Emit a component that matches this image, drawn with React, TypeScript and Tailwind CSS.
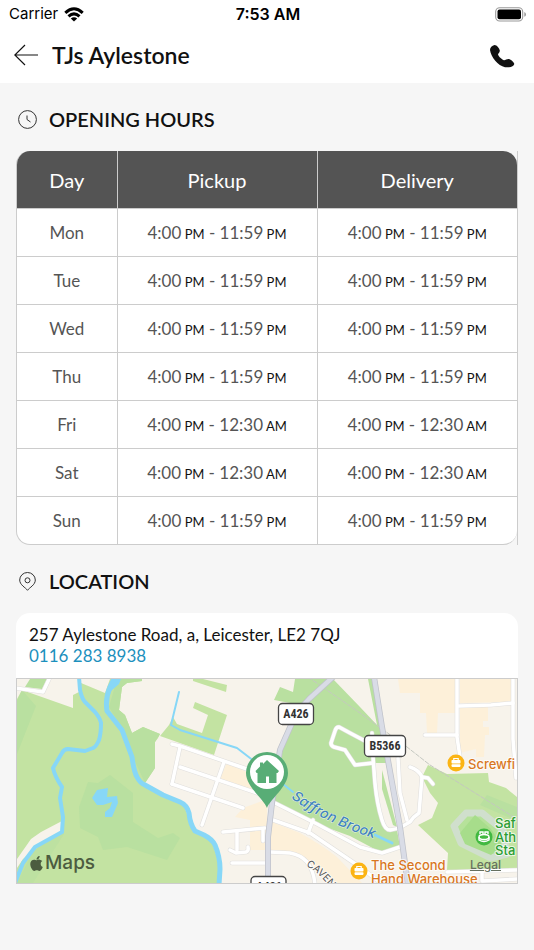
import { FaApple } from 'react-icons/fa';

interface TimeSlot {
  from: string;
  fromPeriod: string;
  to: string;
  toPeriod: string;
}

const evening: TimeSlot = { from: '4:00', fromPeriod: 'PM', to: '11:59', toPeriod: 'PM' };
const late: TimeSlot = { from: '4:00', fromPeriod: 'PM', to: '12:30', toPeriod: 'AM' };

const openingHours = [
  { day: 'Mon', pickup: evening, delivery: evening },
  { day: 'Tue', pickup: evening, delivery: evening },
  { day: 'Wed', pickup: evening, delivery: evening },
  { day: 'Thu', pickup: evening, delivery: evening },
  { day: 'Fri', pickup: late, delivery: late },
  { day: 'Sat', pickup: late, delivery: late },
  { day: 'Sun', pickup: evening, delivery: evening },
];

const streets = [
  'M-2 9L26 13L33-2',
  'M155 65L163 67L230 90L240 96',
  'M163 88L240 114',
  'M155 105L226 129',
  'M163 68L155 105',
  'M207 83L185 146',
  'M256 123L300 145L343 168L365 174L383 168',
  'M256 141L293 154L343 188L364 204',
  'M296 141L291 154',
  'M206 153L248 149',
  'M220 153V171M213 171L219 174L229 173Q232 172 231 168',
  'M246 151V162',
  'M215 184L248 184',
  'M253 173L273 174Q284 176 290 183Q297 192 298 206',
  'M350 63L333 54L322 48Q319 48 318 52L314 64Q314 67 317 68L328 71L338 86L356 84',
  'M355 54L356 78L358 104Q360 125 365 141Q368 151 373 151Q380 150 384 148L393 143Q396 138 402 134L405 98Q402 91 393 88',
  'M405 98L411 99L416 105',
  'M381 79L383 114L390 141',
  'M440-2V58L443 78',
  'M408 56H440',
  'M442 27L474 26L496 24',
  'M496-2V60L499 99',
  'M430 193L500 191M465 192V202L500 200',
];

function Briefcase({ x, y }: { x: number; y: number }) {
  return (
    <g transform={`translate(${x} ${y})`}>
      <circle r="8.5" fill="#fbb414" />
      <path d="M-2.2-3V-4.5H2.2V-3" fill="none" stroke="white" strokeWidth="1.2" />
      <rect x="-4.500" y="-3" width="9" height="3.6" rx=".8" fill="white" />
      <rect x="-4.500" y="1.3" width="9" height="2.600" rx=".8" fill="white" />
    </g>
  );
}

function MapArtwork() {
  return (
    <svg
      viewBox="0 0 500 204"
      preserveAspectRatio="xMidYMid slice"
      className="block h-[204px] w-full"
      role="img"
      aria-label="Map of Aylestone Road"
    >
      <rect width="500" height="204" fill="#f7f3eb" />

      {/* parks */}
      <path d="M13 0H30L25 10L8 8Z" fill="#b9e0a0" />
      <path
        d="M5 11L56 29V16L64 12V4L88 14L93 0H125V2L110 4L105 8L102 31L108 36L115 54L126 48L143 55L141 59L138 63V89L128 104L146 116L166 124L175 148L195 163L202 184V204H0V20Z"
        fill="#c3e3a2"
      />
      <path d="M5 11L19 27L0 75V22Z" fill="#b9e0a0" />
      <path
        d="M100 0H125V2L110 4L105 8L102 31L108 36L115 54L126 48L143 55L138 63V89L128 104L116 78L106 51L92 28Z"
        fill="#b9e0a0"
      />
      <path
        d="M71 103L81 104L93 96L116 114V143L141 159L156 154L163 159L150 181L110 168L86 171L81 158L63 149L62 128Z"
        fill="#b9e0a0"
      />
      <path d="M45 142V153L25 165L6 180L0 189V180L14 160L24 153Z" fill="#f7f3eb" />
      <path d="M45 153L47 155L16 204H0L18 168Z" fill="#b9e0a0" opacity=".6" />
      <path d="M152 46L156 38L160 45L185 54L191 36L176 29L178 23L210 36L197 76L143 57Z" fill="#c3e3a2" />
      <path d="M176 0H186L210 6L209 13L176 2Z" fill="#c3e3a2" />
      <path
        d="M256 123L263 74L284 26L257 21L263 8L276 13L278 0H316L343 28L360 46L351 0H358L370 84H358L362 130L371 151H380L383 168L365 174L333 157L300 145Z"
        fill="#b9e0a0"
      />
      <path d="M365 91L380 148L376 146L365 110Z" fill="#b9e0a0" />
      <path
        d="M411 86L430 95L471 94L472 103L489 109L500 118V191H430L431 174L401 146L415 139L421 124L413 114L405 98Z"
        fill="#c3e3a2"
      />
      <path d="M470 116L500 128V142L463 126Z" fill="#b9e0a0" />

      {/* commercial blocks */}
      <path d="M381 0H440V34H421L420 54H410L409 34H403V14H383Z" fill="#fdf0d9" />
      <path d="M443 0H494V23L443 24ZM443 28H471V42H466V48H472V56H468L467 78H459V70L443 74Z" fill="#fdf0d9" />
      <path d="M210 84L230 93L238 114L203 99Z" fill="#fdf0d9" />
      <path d="M226 129L250 120V171H233V141L218 138Z" fill="#fdf0d9" />
      <path d="M255 143L283 154Q305 166 320 178L345 204H313L293 184L275 174L253 171Z" fill="#fdf0d9" />

      {/* athletics track */}
      <path
        d="M437 147L449 134L465 134L486 151L490 175L474 179L444 164Z"
        fill="#b6e29a"
        stroke="#d0dfcd"
        strokeWidth="7"
        strokeLinejoin="round"
      />
      <path d="M443 154L458 136L474 150L485 166L474 176L448 165Z" fill="#a7dd8b" />

      {/* water */}
      <g fill="none" stroke="#87d7f7" strokeLinecap="round" strokeLinejoin="round">
        <path
          d="M62-2L63 11Q65 20 68 23L78 33Q83 39 84 44Q84 55 82 61Q79 68 76 69L68 72L51 70Q47 70 45 74L36 89Q38 98 45 108L43 119L46 138L45 153L18 168L6 184L-2 204"
          strokeWidth="4"
        />
        <path
          d="M98-2L93 8Q88 20 90 32L105 51L115 78Q117 93 120 98Q123 104 128 106L146 116L163 123Q170 126 172 134Q173 145 178 152L187 156Q195 160 198 166Q203 178 203 190L202 206"
          strokeWidth="5"
        />
        <path d="M162 13L154 46L163 51L220 69L233 79L276 113" strokeWidth="2" />
        <path d="M358 156L375 164" strokeWidth="3" />
      </g>
      <path d="M94 0H104L102 5L94 12Z" fill="#87d7f7" />
      <path
        d="M75 119L80 111L91 109L90 118L100 117L101 124L95 138H88V133L93 129L95 123L86 126H80Z"
        fill="#87d7f7"
      />

      {/* railway */}
      <path d="M291-2L343 34L390 68L413 86L500 140" fill="none" stroke="#c4c7c0" strokeWidth="1" strokeDasharray="5 1" />

      {/* streets */}
      <g fill="none" strokeLinecap="round" strokeLinejoin="round">
        <g stroke="#e0dfdd" strokeWidth="4.600">
          {streets.map((d) => (
            <path key={d} d={d} />
          ))}
        </g>
        <g stroke="white" strokeWidth="3.500">
          {streets.map((d) => (
            <path key={d} d={d} />
          ))}
        </g>
        <g stroke="#bfc2ca" strokeWidth="6">
          <path d="M316-2L292 20Q280 32 275 44L263 71L255 124L251 158V206" />
          <path d="M357-2L365 48L383 148L391 206" />
        </g>
        <g stroke="#d9dce6" strokeWidth="4.500">
          <path d="M316-2L292 20Q280 32 275 44L263 71L255 124L251 158V206" />
          <path d="M357-2L365 48L383 148L391 206" />
        </g>
      </g>

      {/* road shields */}
      <g
        fill="#333"
        textAnchor="middle"
        fontFamily="'Liberation Sans Narrow', 'Roboto Condensed', Roboto, sans-serif"
        fontSize="12"
        fontWeight="700"
      >
        <rect x="261.500" y="24.500" width="35" height="21" rx="4" fill="white" stroke="#444" strokeWidth="1.300" />
        <text x="279" y="39">A426</text>
        <rect x="347.500" y="56.500" width="41" height="21" rx="4" fill="white" stroke="#444" strokeWidth="1.300" />
        <text x="368" y="71">B5366</text>
        <rect x="234" y="197.500" width="35" height="21" rx="4" fill="white" stroke="#444" strokeWidth="1.300" />
        <text x="252" y="212">A426</text>
      </g>

      {/* labels */}
      <path id="brook" d="M274 119Q312 147 366 162" fill="none" />
      <path id="caven" d="M289 187Q304 194 322 220" fill="none" />
      <g fontFamily="Inter, sans-serif" stroke="white" strokeOpacity=".7" paintOrder="stroke" strokeLinejoin="round">
        <text fontSize="14" fontWeight="500" fontStyle="italic" fill="#4285bd" strokeWidth="1">
          <textPath href="#brook">Saffron Brook</textPath>
        </text>
        <text fontSize="10" fill="#555" strokeWidth="2">
          <textPath href="#caven">CAVEN</textPath>
        </text>
        <g fontSize="13" fontWeight="500" fill="#d9771f" strokeWidth="2">
          <text x="451" y="90">Screwfi</text>
          <text x="354" y="191">The Second</text>
          <text x="354" y="205">Hand Warehouse</text>
        </g>
        <g fontSize="13" fontWeight="500" fill="#2b9d33" strokeWidth="2">
          <text x="478" y="149">Saf</text>
          <text x="478" y="163">Ath</text>
          <text x="478" y="176">Sta</text>
        </g>
      </g>
      <Briefcase x={439} y={84} />
      <Briefcase x={342} y={192} />
      <circle cx="467" cy="158" r="8.500" fill="#42b941" />
      <g fill="none" stroke="white" strokeWidth="1.400">
        <ellipse cx="467" cy="158" rx="5" ry="2.500" />
        <path d="M462 158V161Q467 164 472 161V158M463 155V153H466V155M468 155V153H471V155" />
      </g>

      {/* restaurant marker */}
      <path d="M250 129C247 120 229 108 229 94A21 21 0 0 1 271 94C271 108 253 120 250 129Z" fill="#58ad76" />
      <circle cx="250" cy="93" r="17" fill="white" />
      <path
        d="M250 81L262 92L260.500 94H259.500V104H252V97.500H249V104H240.500V94H239.500L238.500 92L243 87.500V83.500H246V85Z"
        fill="#58ad76"
      />
    </svg>
  );
}

function StatusBar() {
  return (
    <div className="grid h-7 grid-cols-3 items-center pr-[7px] pl-[9px] font-['Inter',sans-serif] text-[15px] text-black">
      <div className="flex items-center gap-[6px]">
        <span>Carrier</span>
        <svg width="20" height="15" viewBox="0 0 20 15" fill="none" stroke="black" strokeWidth="3">
          <path d="M1.300 5.800Q10-2.200 18.700 5.800M4.500 9.400Q10 4.200 15.500 9.400" />
          <path d="M10 14.500L6.800 11.500Q10 9 13.200 11.500Z" fill="black" stroke="none" />
        </svg>
      </div>
      <span className="text-center text-base leading-6 font-semibold">7:53 AM</span>
      <svg width="32" height="15" viewBox="0 0 32 15" className="justify-self-end">
        <rect x=".7" y=".7" width="27" height="13.300" rx="4" fill="white" stroke="#999" strokeWidth="1.100" />
        <rect x="2.500" y="2.500" width="23.500" height="9.700" rx="2" fill="black" />
        <path d="M29.300 5V9.800Q31 9 31 7.400T29.300 5Z" fill="#999" />
      </svg>
    </div>
  );
}

function Hours({ slot }: { slot: TimeSlot }) {
  return (
    <>
      {slot.from}
      <span className="text-[13px] text-[#111]"> {slot.fromPeriod}</span> - {slot.to}
      <span className="text-[13px] text-[#111]"> {slot.toPeriod}</span>
    </>
  );
}

export default function App() {
  return (
    <div className="min-h-screen bg-[#f6f6f6] font-['Lato',sans-serif] text-[#111]">
      <header className="bg-white">
        <StatusBar />
        <div className="flex h-[55px] items-center pr-[19px] pb-[2px] pl-[14px]">
          <button type="button" aria-label="Back">
            <svg width="24" height="22" viewBox="0 0 24 22" fill="none" stroke="#111" strokeWidth="1.200">
              <path d="M11 1L.8 11L11 21M.8 11H24" />
            </svg>
          </button>
          <h1 className="ml-[14px] flex-1 text-[23px] leading-7 font-semibold">TJs Aylestone</h1>
          <a href="tel:01162838938" aria-label="Call" className="pt-1">
            <svg width="25" height="23" viewBox="0 0 25 23" fill="#111">
              <path d="M4.500 0C7 0 9.500 3.500 9.800 5.500C10 7.500 8 8.500 8 9.500C8.500 11.500 12.500 15 14 15.200C15.500 15.300 17 13.800 18.800 14C21 14.500 24 17 24.300 19C24 21 21.500 22 19 22.300H15C8 20.500 1 12.500 0 5C0 2.500 2 .5 4.500 0Z" />
            </svg>
          </a>
        </div>
      </header>

      <main className="px-4 pt-[22px]">
        <section>
          <div className="flex items-center gap-3 pl-[2px]">
            <svg width="19" height="19" viewBox="0 0 19 19" fill="none" stroke="#333" strokeWidth="1">
              <circle cx="9.500" cy="9.500" r="8.900" />
              <path d="M9 5.500V9.500L12.500 12" />
            </svg>
            <h2 className="text-xl leading-7 font-semibold">OPENING HOURS</h2>
          </div>

          <div className="mt-[18px] border-r border-[#ccc]">
            <div className="overflow-hidden rounded-[14px] border-b border-l border-[#ccc] bg-white">
              <table className="w-full table-fixed border-collapse text-center">
                <thead>
                  <tr className="h-[57px] bg-[#545454] text-xl text-white">
                    <th className="w-1/5 pt-[2px] font-normal">Day</th>
                    <th className="border-l border-[#ccc] pt-[2px] font-normal">Pickup</th>
                    <th className="border-l border-[#ccc] pt-[2px] font-normal">Delivery</th>
                  </tr>
                </thead>
                <tbody>
                  {openingHours.map(({ day, pickup, delivery }) => (
                    <tr key={day} className="h-12 border-t border-[#ccc] text-[17px] text-[#555]">
                      <td className="pt-px">{day}</td>
                      <td className="border-l border-[#ccc] pt-px">
                        <Hours slot={pickup} />
                      </td>
                      <td className="border-l border-[#ccc] pt-px">
                        <Hours slot={delivery} />
                      </td>
                    </tr>
                  ))}
                </tbody>
              </table>
            </div>
          </div>
        </section>

        <section className="pt-[22px]">
          <div className="flex items-center gap-3 pl-[2px]">
            <svg width="19" height="19" viewBox="0 0 19 19" fill="none" stroke="#333" strokeWidth="1">
              <path d="M9.500 18.300C7.500 15.500 1.700 13 1.700 8A7.800 7.500 0 0 1 17.300 8C17.300 13 11.500 15.500 9.500 18.300Z" />
              <circle cx="9.500" cy="8.300" r="2.500" />
            </svg>
            <h2 className="text-xl leading-7 font-semibold">LOCATION</h2>
          </div>

          <div className="mt-[18px] overflow-hidden rounded-t-[14px] bg-white">
            <address className="px-[13px] pt-[11px] pb-3 text-[17px] leading-[21px] not-italic">
              <p>257 Aylestone Road, a, Leicester, LE2 7QJ</p>
              <a href="tel:01162838938" className="block text-[#1c90bd]">
                0116 283 8938
              </a>
            </address>
            <div className="relative border border-[#ccc]">
              <MapArtwork />
              <div className="absolute bottom-2 left-[11px] flex items-center font-['Inter',sans-serif] text-[19px] leading-6 font-medium text-[#4c5c40]">
                <FaApple size={17} />
                <span>Maps</span>
              </div>
              <a
                href="#legal"
                className="absolute right-4 bottom-[10px] font-['Inter',sans-serif] text-xs font-medium text-[#66705f] underline"
              >
                Legal
              </a>
            </div>
          </div>
        </section>
      </main>
    </div>
  );
}
